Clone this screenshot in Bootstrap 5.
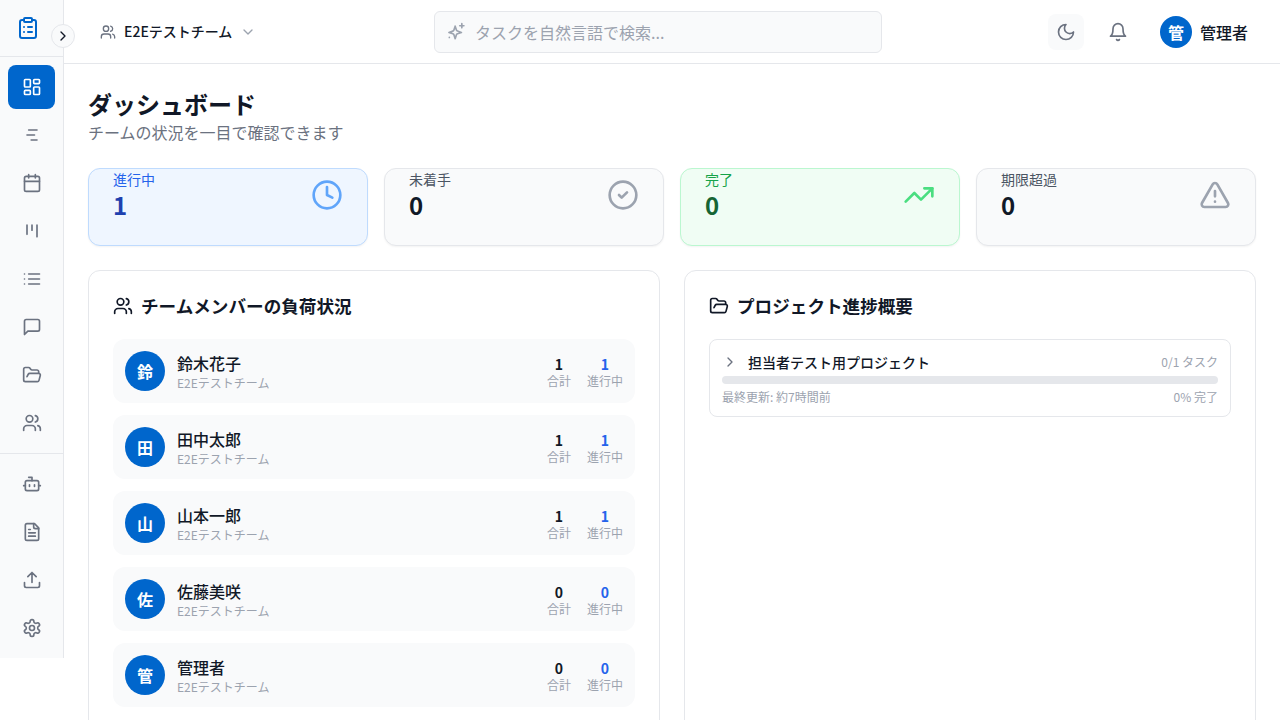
<!DOCTYPE html>
<html lang="ja">
<head>
    <meta charset="UTF-8">
    <meta name="viewport" content="width=device-width, initial-scale=1.0">
    <title>ダッシュボード</title>

    <link href="https://cdn.jsdelivr.net/npm/bootstrap@5.3.0/dist/css/bootstrap.min.css" rel="stylesheet">

    <style>
        html, body { height: 100%; overflow: hidden; }
        body { font-family: "Noto Sans CJK JP", "Noto Sans", sans-serif; color: #111827; background: #fff; }
        .ico { fill: none; stroke: currentColor; stroke-width: 2; stroke-linecap: round; stroke-linejoin: round; flex: none; display: block; }
        .app-shell { height: 720px; overflow: hidden; }

        .side-rail { width: 64px; height: 658px; background: #f9fafb; border-right: 1px solid #e5e7eb; flex: none; position: relative; }
        .side-logo { height: 57px; border-bottom: 1px solid #e5e7eb; color: #0066cc; padding-right: 7px; }
        .side-toggle { position: absolute; left: 51px; top: 24px; width: 24px; height: 24px; border-radius: 50%; background: #f9fafb; border: 1px solid #e5e7eb; color: #111827; z-index: 2; }
        .side-group { padding: 8px; }
        .side-group + .side-group { border-top: 1px solid #e5e7eb; padding-top: 8px; }
        .side-link { width: 47px; height: 44px; border-radius: 8px; color: #6b7280; margin-bottom: 4px; }
        .side-link:last-child { margin-bottom: 0; }
        .side-link.is-on { background: #0066cc; color: #fff; }

        .top-bar { height: 64px; border-bottom: 1px solid #e5e7eb; padding: 0 24px; flex: none; }
        .team-pick { font-size: 14px; font-weight: 500; width: 346px; padding-left: 12px; }
        .team-pick .ico { color: #6b7280; }
        .team-pick .ico.dim { color: #9ca3af; }
        .search-box { width: 448px; height: 42px; background: #f9fafb; border: 1px solid #e5e7eb; border-radius: 6px; padding: 0 11px; color: #9ca3af; font-size: 16px; }
        .search-box .ico { color: #9ca3af; }
        .search-box input { background: transparent; border: 0; outline: 0; padding: 0 0 0 1px; width: 100%; font-size: 16px; color: #111827; }
        .search-box input::placeholder { color: #9ca3af; opacity: 1; }
        .round-btn { width: 36px; height: 36px; border-radius: 8px; color: #6b7280; }
        .round-btn.tinted { background: #f9fafb; }
        .user-dot { background: #0066cc; color: #fff; border-radius: 50%; font-weight: 700; flex: none; }
        .user-name { font-size: 16px; font-weight: 500; }

        .page-body { padding: 24px; }
        .page-title { font-size: 24px; font-weight: 700; line-height: 32px; margin: 0; }
        .page-sub { font-size: 16px; line-height: 24px; color: #6b7280; margin: 0 0 24px; }

        .stat-tile { flex: 1 1 0; height: 78px; border: 1px solid #e5e7eb; border-radius: 12px; background: #f9fafb; padding: 0 24px; box-shadow: 0 1px 2px rgba(0,0,0,.05); }
        .stat-label { font-size: 14px; line-height: 20px; color: #4b5563; }
        .stat-num { font-size: 24px; font-weight: 700; line-height: 32px; }
        .stat-tile .ico { margin-top: 10px; color: #9ca3af; }
        .tile-blue { background: #eff6ff; border-color: #bfdbfe; }
        .tile-blue .stat-label { color: #2563eb; }
        .tile-blue .stat-num { color: #1e40af; }
        .tile-blue .ico { color: #60a5fa; }
        .tile-green { background: #f0fdf4; border-color: #bbf7d0; }
        .tile-green .stat-label { color: #16a34a; }
        .tile-green .stat-num { color: #166534; }
        .tile-green .ico { color: #4ade80; }

        .panel-box { flex: 1 1 0; height: 600px; border: 1px solid #e5e7eb; border-radius: 12px; padding: 24px; background: #fff; }
        .panel-head { font-size: 17.6px; font-weight: 700; line-height: 22px; margin: 0 0 22px; }
        .member-row { height: 64px; background: #f9fafb; border-radius: 12px; padding: 0 12px; margin-bottom: 12px; }
        .member-name { font-size: 16px; line-height: 24px; font-weight: 500; }
        .member-team { font-size: 12px; line-height: 16px; color: #9ca3af; }
        .mini-stat { font-size: 12px; line-height: 16px; color: #9ca3af; text-align: center; }
        .mini-num { font-size: 14px; line-height: 20px; font-weight: 700; color: #111827; padding-top: 1px; margin-bottom: -1px; }
        .mini-num.blue { color: #2563eb; }

        .project-box { height: 78px; border: 1px solid #e5e7eb; border-radius: 8px; padding: 12px; }
        .project-name { font-size: 14px; line-height: 20px; font-weight: 500; margin-left: 10px; }
        .project-note { font-size: 12px; line-height: 16px; color: #9ca3af; }
        .project-box .ico { color: #6b7280; }
        .bar-track { height: 8px; background: #e5e7eb; border-radius: 4px; margin: 4px 0 5px; }
    </style>
</head>
<body>

    <svg width="0" height="0" class="position-absolute">
        <defs>
            <symbol id="i-clipboard" viewBox="0 0 24 24"><rect x="8" y="2" width="8" height="4" rx="1"/><path d="M16 4h2a2 2 0 0 1 2 2v14a2 2 0 0 1-2 2H6a2 2 0 0 1-2-2V6a2 2 0 0 1 2-2h2"/><path d="M12 11h4M12 16h4M8 11h.01M8 16h.01"/></symbol>
            <symbol id="i-dashboard" viewBox="0 0 24 24"><rect x="3" y="3" width="7" height="9" rx="1"/><rect x="14" y="3" width="7" height="5" rx="1"/><rect x="14" y="12" width="7" height="9" rx="1"/><rect x="3" y="16" width="7" height="5" rx="1"/></symbol>
            <symbol id="i-gantt" viewBox="0 0 24 24"><path d="M8 6h10M6 12h9M11 18h7"/></symbol>
            <symbol id="i-calendar" viewBox="0 0 24 24"><path d="M8 2v4M16 2v4"/><rect x="3" y="4" width="18" height="18" rx="2"/><path d="M3 10h18"/></symbol>
            <symbol id="i-kanban" viewBox="0 0 24 24"><path d="M6 5v11M12 5v6M18 5v14"/></symbol>
            <symbol id="i-list" viewBox="0 0 24 24"><path d="M3 12h.01M3 18h.01M3 6h.01M8 12h13M8 18h13M8 6h13"/></symbol>
            <symbol id="i-message" viewBox="0 0 24 24"><path d="M21 15a2 2 0 0 1-2 2H7l-4 4V5a2 2 0 0 1 2-2h14a2 2 0 0 1 2 2z"/></symbol>
            <symbol id="i-folder" viewBox="0 0 24 24"><path d="m6 14 1.5-2.9A2 2 0 0 1 9.24 10H20a2 2 0 0 1 1.94 2.5l-1.54 6a2 2 0 0 1-1.95 1.5H4a2 2 0 0 1-2-2V5a2 2 0 0 1 2-2h3.9a2 2 0 0 1 1.69.9l.81 1.2a2 2 0 0 0 1.67.9H18a2 2 0 0 1 2 2v2"/></symbol>
            <symbol id="i-users" viewBox="0 0 24 24"><path d="M16 21v-2a4 4 0 0 0-4-4H6a4 4 0 0 0-4 4v2"/><circle cx="9" cy="7" r="4"/><path d="M22 21v-2a4 4 0 0 0-3-3.87M16 3.13a4 4 0 0 1 0 7.75"/></symbol>
            <symbol id="i-bot" viewBox="0 0 24 24"><path d="M12 8V4H8"/><rect x="4" y="8" width="16" height="12" rx="2"/><path d="M2 14h2M20 14h2M15 13v2M9 13v2"/></symbol>
            <symbol id="i-file" viewBox="0 0 24 24"><path d="M15 2H6a2 2 0 0 0-2 2v16a2 2 0 0 0 2 2h12a2 2 0 0 0 2-2V7Z"/><path d="M14 2v4a2 2 0 0 0 2 2h4M10 9H8M16 13H8M16 17H8"/></symbol>
            <symbol id="i-upload" viewBox="0 0 24 24"><path d="M21 15v4a2 2 0 0 1-2 2H5a2 2 0 0 1-2-2v-4"/><path d="M17 8l-5-5-5 5M12 3v12"/></symbol>
            <symbol id="i-settings" viewBox="0 0 24 24"><path d="M12.22 2h-.44a2 2 0 0 0-2 2v.18a2 2 0 0 1-1 1.73l-.43.25a2 2 0 0 1-2 0l-.15-.08a2 2 0 0 0-2.73.73l-.22.38a2 2 0 0 0 .73 2.73l.15.1a2 2 0 0 1 1 1.72v.51a2 2 0 0 1-1 1.74l-.15.09a2 2 0 0 0-.73 2.73l.22.38a2 2 0 0 0 2.73.73l.15-.08a2 2 0 0 1 2 0l.43.25a2 2 0 0 1 1 1.73V20a2 2 0 0 0 2 2h.44a2 2 0 0 0 2-2v-.18a2 2 0 0 1 1-1.73l.43-.25a2 2 0 0 1 2 0l.15.08a2 2 0 0 0 2.73-.73l.22-.39a2 2 0 0 0-.73-2.73l-.15-.08a2 2 0 0 1-1-1.74v-.5a2 2 0 0 1 1-1.74l.15-.09a2 2 0 0 0 .73-2.73l-.22-.38a2 2 0 0 0-2.73-.73l-.15.08a2 2 0 0 1-2 0l-.43-.25a2 2 0 0 1-1-1.73V4a2 2 0 0 0-2-2z"/><circle cx="12" cy="12" r="3"/></symbol>
            <symbol id="i-moon" viewBox="0 0 24 24"><path d="M12 3a6 6 0 0 0 9 9 9 9 0 1 1-9-9Z"/></symbol>
            <symbol id="i-bell" viewBox="0 0 24 24"><path d="M6 8a6 6 0 0 1 12 0c0 7 3 9 3 9H3s3-2 3-9"/><path d="M10.3 21a1.94 1.94 0 0 0 3.4 0"/></symbol>
            <symbol id="i-sparkles" viewBox="0 0 24 24"><path d="M11 5l-1.5 4.6a2 2 0 0 1-1.3 1.3L3.5 12.5l4.7 1.6a2 2 0 0 1 1.3 1.3L11 20l1.5-4.6a2 2 0 0 1 1.3-1.3l4.7-1.6-4.7-1.6a2 2 0 0 1-1.3-1.3L11 5Z"/><path d="M19 2v5M16.5 4.5h5M4 18.5h.01"/></symbol>
            <symbol id="i-clock" viewBox="0 0 24 24"><circle cx="12" cy="12" r="10"/><path d="M12 6v6l4 2"/></symbol>
            <symbol id="i-check" viewBox="0 0 24 24"><circle cx="12" cy="12" r="10"/><path d="m9 12 2 2 4-4"/></symbol>
            <symbol id="i-trend" viewBox="0 0 24 24"><path d="M22 7l-8.5 8.5-5-5L2 17"/><path d="M16 7h6v6"/></symbol>
            <symbol id="i-alert" viewBox="0 0 24 24"><path d="m21.73 18-8-14a2 2 0 0 0-3.48 0l-8 14A2 2 0 0 0 4 21h16a2 2 0 0 0 1.73-3Z"/><path d="M12 9v4M12 17h.01"/></symbol>
            <symbol id="i-right" viewBox="0 0 24 24"><path d="m9 18 6-6-6-6"/></symbol>
            <symbol id="i-down" viewBox="0 0 24 24"><path d="m6 9 6 6 6-6"/></symbol>
        </defs>
    </svg>

    <div class="app-shell d-flex">

        <aside class="side-rail">
            <div class="side-logo d-flex align-items-center justify-content-center">
                <svg class="ico" width="24" height="24"><use href="#i-clipboard"/></svg>
            </div>
            <div class="side-toggle d-flex align-items-center justify-content-center">
                <svg class="ico" width="16" height="16"><use href="#i-right"/></svg>
            </div>
            <div class="side-group">
                <div class="side-link is-on d-flex align-items-center justify-content-center"><svg class="ico" width="20" height="20"><use href="#i-dashboard"/></svg></div>
                <div class="side-link d-flex align-items-center justify-content-center"><svg class="ico" width="20" height="20"><use href="#i-gantt"/></svg></div>
                <div class="side-link d-flex align-items-center justify-content-center"><svg class="ico" width="20" height="20"><use href="#i-calendar"/></svg></div>
                <div class="side-link d-flex align-items-center justify-content-center"><svg class="ico" width="20" height="20"><use href="#i-kanban"/></svg></div>
                <div class="side-link d-flex align-items-center justify-content-center"><svg class="ico" width="20" height="20"><use href="#i-list"/></svg></div>
                <div class="side-link d-flex align-items-center justify-content-center"><svg class="ico" width="20" height="20"><use href="#i-message"/></svg></div>
                <div class="side-link d-flex align-items-center justify-content-center"><svg class="ico" width="20" height="20"><use href="#i-folder"/></svg></div>
                <div class="side-link d-flex align-items-center justify-content-center"><svg class="ico" width="20" height="20"><use href="#i-users"/></svg></div>
            </div>
            <div class="side-group">
                <div class="side-link d-flex align-items-center justify-content-center"><svg class="ico" width="20" height="20"><use href="#i-bot"/></svg></div>
                <div class="side-link d-flex align-items-center justify-content-center"><svg class="ico" width="20" height="20"><use href="#i-file"/></svg></div>
                <div class="side-link d-flex align-items-center justify-content-center"><svg class="ico" width="20" height="20"><use href="#i-upload"/></svg></div>
                <div class="side-link d-flex align-items-center justify-content-center"><svg class="ico" width="20" height="20"><use href="#i-settings"/></svg></div>
            </div>
        </aside>

        <div class="flex-grow-1 d-flex flex-column">
            <header class="top-bar d-flex align-items-center">
                <div class="team-pick d-flex align-items-center gap-2">
                    <svg class="ico" width="16" height="16"><use href="#i-users"/></svg>
                    <span>E2Eテストチーム</span>
                    <svg class="ico dim" width="16" height="16"><use href="#i-down"/></svg>
                </div>
                <div class="search-box d-flex align-items-center gap-2">
                    <svg class="ico" width="20" height="20"><use href="#i-sparkles"/></svg>
                    <input type="text" placeholder="タスクを自然言語で検索...">
                </div>
                <div class="d-flex align-items-center ms-auto">
                    <div class="round-btn tinted d-flex align-items-center justify-content-center"><svg class="ico" width="20" height="20"><use href="#i-moon"/></svg></div>
                    <div class="round-btn d-flex align-items-center justify-content-center ms-3"><svg class="ico" width="20" height="20"><use href="#i-bell"/></svg></div>
                    <div class="user-dot d-flex align-items-center justify-content-center ms-4" style="width:32px;height:32px;font-size:16px">管</div>
                    <span class="user-name ms-2 me-2">管理者</span>
                </div>
            </header>

            <main class="page-body">
                <h1 class="page-title">ダッシュボード</h1>
                <p class="page-sub">チームの状況を一目で確認できます</p>

                <div class="d-flex gap-3 mb-4">
                    <div class="stat-tile tile-blue d-flex justify-content-between align-items-start">
                        <div><div class="stat-label">進行中</div><div class="stat-num">1</div></div>
                        <svg class="ico" width="32" height="32"><use href="#i-clock"/></svg>
                    </div>
                    <div class="stat-tile d-flex justify-content-between align-items-start">
                        <div><div class="stat-label">未着手</div><div class="stat-num">0</div></div>
                        <svg class="ico" width="32" height="32"><use href="#i-check"/></svg>
                    </div>
                    <div class="stat-tile tile-green d-flex justify-content-between align-items-start">
                        <div><div class="stat-label">完了</div><div class="stat-num">0</div></div>
                        <svg class="ico" width="32" height="32"><use href="#i-trend"/></svg>
                    </div>
                    <div class="stat-tile d-flex justify-content-between align-items-start">
                        <div><div class="stat-label">期限超過</div><div class="stat-num">0</div></div>
                        <svg class="ico" width="32" height="32"><use href="#i-alert"/></svg>
                    </div>
                </div>

                <div class="d-flex gap-4">
                    <section class="panel-box">
                        <h2 class="panel-head d-flex align-items-center gap-2"><svg class="ico" width="20" height="20"><use href="#i-users"/></svg>チームメンバーの負荷状況</h2>
                        <div id="members"></div>
                    </section>
                    <section class="panel-box">
                        <h2 class="panel-head d-flex align-items-center gap-2"><svg class="ico" width="20" height="20"><use href="#i-folder"/></svg>プロジェクト進捗概要</h2>
                        <div class="project-box">
                            <div class="d-flex align-items-center">
                                <svg class="ico" width="16" height="16"><use href="#i-right"/></svg>
                                <span class="project-name">担当者テスト用プロジェクト</span>
                                <span class="project-note ms-auto">0/1 タスク</span>
                            </div>
                            <div class="bar-track"></div>
                            <div class="d-flex justify-content-between project-note">
                                <span>最終更新: 約7時間前</span>
                                <span>0% 完了</span>
                            </div>
                        </div>
                    </section>
                </div>
            </main>
        </div>
    </div>

    <script src="https://cdn.jsdelivr.net/npm/bootstrap@5.3.0/dist/js/bootstrap.bundle.min.js"></script>

    <script>
        const members = [
            { name: "鈴木花子", total: 1, doing: 1 },
            { name: "田中太郎", total: 1, doing: 1 },
            { name: "山本一郎", total: 1, doing: 1 },
            { name: "佐藤美咲", total: 0, doing: 0 },
            { name: "管理者", total: 0, doing: 0 }
        ];

        document.getElementById("members").innerHTML = members.map(m => `
            <div class="member-row d-flex align-items-center">
                <div class="user-dot d-flex align-items-center justify-content-center" style="width:40px;height:40px;font-size:16px">${m.name[0]}</div>
                <div class="ms-2 ps-1 flex-grow-1">
                    <div class="member-name">${m.name}</div>
                    <div class="member-team">E2Eテストチーム</div>
                </div>
                <div class="d-flex gap-3">
                    <div class="mini-stat"><div class="mini-num">${m.total}</div>合計</div>
                    <div class="mini-stat"><div class="mini-num blue">${m.doing}</div>進行中</div>
                </div>
            </div>`).join("");
    </script>
</body>
</html>
